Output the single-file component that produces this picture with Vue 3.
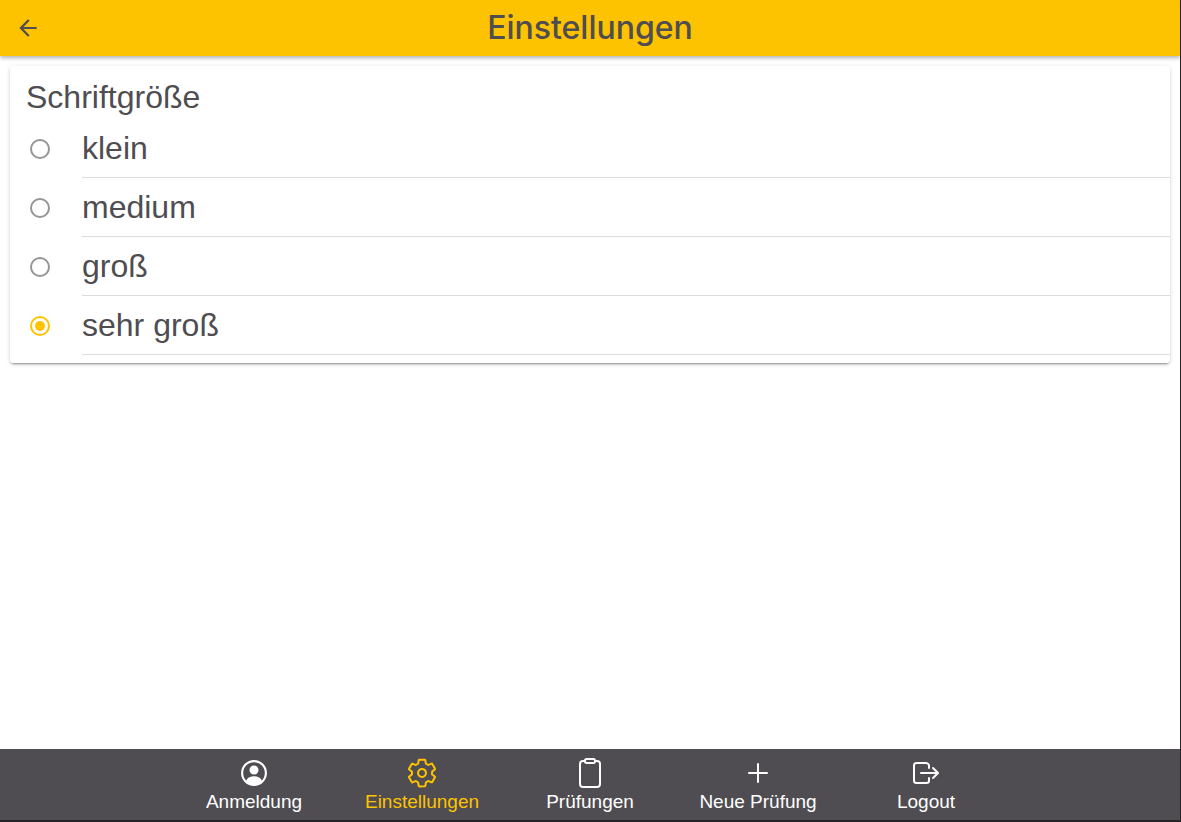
<script setup>
import { ref } from 'vue'

const sizes = [
  { value: 'small', label: 'klein' },
  { value: 'medium', label: 'medium' },
  { value: 'large', label: 'groß' },
  { value: 'xlarge', label: 'sehr groß' }
]
const size = ref('xlarge')

const gear =
  'M262.29 192.31a64 64 0 1057.4 57.4 64.13 64.13 0 00-57.4-57.4zM416.39 256a154.34 154.34 0 01-1.53 20.79l45.21 35.46a10.81 10.81 0 012.45 13.75l-42.77 74a10.81 10.81 0 01-13.14 4.59l-44.9-18.08a16.11 16.11 0 00-15.17 1.75A164.48 164.48 0 01325 400.8a15.94 15.94 0 00-8.82 12.14l-6.73 47.89a11.08 11.08 0 01-10.68 9.17h-85.54a11.11 11.11 0 01-10.69-8.87l-6.72-47.82a16.07 16.07 0 00-9-12.22 155.3 155.3 0 01-21.46-12.57 16 16 0 00-15.11-1.71l-44.89 18.07a10.81 10.81 0 01-13.14-4.58l-42.77-74a10.8 10.8 0 012.45-13.75l38.21-30a16.05 16.05 0 006-14.08c-.36-4.17-.58-8.33-.58-12.5s.21-8.27.58-12.35a16 16 0 00-6.07-13.94l-38.19-30A10.81 10.81 0 0149.48 186l42.77-74a10.81 10.81 0 0113.14-4.59l44.9 18.08a16.11 16.11 0 0015.17-1.75A164.48 164.48 0 01187 111.2a15.94 15.94 0 008.82-12.14l6.73-47.89A11.08 11.08 0 01213.23 42h85.54a11.11 11.11 0 0110.69 8.87l6.72 47.82a16.07 16.07 0 009 12.22 155.3 155.3 0 0121.46 12.57 16 16 0 0015.11 1.71l44.89-18.07a10.81 10.81 0 0113.14 4.58l42.77 74a10.8 10.8 0 01-2.45 13.75l-38.21 30a16.05 16.05 0 00-6.05 14.08c.33 4.14.55 8.3.55 12.47z'
</script>

<template>
  <div class="app">
    <header class="toolbar">
      <button class="back" type="button" aria-label="Zurück">
        <svg viewBox="0 0 24 24" aria-hidden="true">
          <path d="M20 11H7.83l5.59-5.59L12 4l-8 8 8 8 1.41-1.41L7.83 13H20v-2z" />
        </svg>
      </button>
      <h1 class="title">Einstellungen</h1>
    </header>

    <main class="content">
      <fieldset class="card">
        <legend class="heading">Schriftgröße</legend>
        <label v-for="s in sizes" :key="s.value" class="option">
          <input v-model="size" class="radio" type="radio" name="font-size" :value="s.value" />
          <span class="option-text">{{ s.label }}</span>
        </label>
      </fieldset>
    </main>

    <nav class="tabs">
      <a class="tab" href="#anmeldung">
        <svg class="icon" viewBox="0 0 512 512" aria-hidden="true">
          <circle cx="256" cy="256" r="190" class="thick" />
          <circle cx="256" cy="208" r="72" class="solid" />
          <path class="solid" d="M122 386c24-49 76-78 134-78s110 29 134 78c-34 38-82 62-134 62s-100-24-134-62z" />
        </svg>
        <span>Anmeldung</span>
      </a>
      <a class="tab active" href="#einstellungen" aria-current="page">
        <svg class="icon" viewBox="0 0 512 512" aria-hidden="true"><path :d="gear" /></svg>
        <span>Einstellungen</span>
      </a>
      <a class="tab" href="#pruefungen">
        <svg class="icon" viewBox="0 0 512 512" aria-hidden="true">
          <path d="M336 64h32a48 48 0 0148 48v320a48 48 0 01-48 48H144a48 48 0 01-48-48V112a48 48 0 0148-48h32" />
          <rect x="176" y="32" width="160" height="64" rx="26" />
        </svg>
        <span>Prüfungen</span>
      </a>
      <a class="tab" href="#neue-pruefung">
        <svg class="icon" viewBox="0 0 512 512" aria-hidden="true"><path d="M256 112v288M400 256H112" /></svg>
        <span>Neue Prüfung</span>
      </a>
      <a class="tab" href="#logout">
        <svg class="icon" viewBox="0 0 512 512" aria-hidden="true">
          <path d="M304 336v40a40 40 0 01-40 40H104a40 40 0 01-40-40V136a40 40 0 0140-40h152c22.09 0 48 17.91 48 40v40M368 336l80-80-80-80M176 256h256" />
        </svg>
        <span>Logout</span>
      </a>
    </nav>
  </div>
</template>

<style>
body {
  margin: 0;
  background: #fff;
}
</style>

<style scoped>
.app {
  box-sizing: border-box;
  display: flex;
  flex-direction: column;
  min-height: 100vh;
  border-right: 1px solid #262427;
  border-bottom: 2px solid #262427;
  color: #4f4d51;
  font-family: "Liberation Sans", Arial, sans-serif;
}
.toolbar {
  display: grid;
  grid-template-columns: 56px 1fr 56px;
  align-items: center;
  min-height: 56px;
  background: #fdc200;
  box-shadow: 0 2px 4px rgba(0, 0, 0, 0.3);
}
.back {
  display: flex;
  align-items: center;
  justify-content: center;
  height: 48px;
  padding: 0;
  border: 0;
  background: none;
  color: inherit;
}
.back svg {
  width: 26px;
  height: 26px;
  fill: currentColor;
}
.title {
  margin: 0;
  text-align: center;
  font-family: Inter, "Liberation Sans", sans-serif;
  font-size: 32px;
  line-height: 40px;
  font-weight: 500;
}
.content {
  flex: 1;
  padding: 10px;
}
.card {
  margin: 0;
  padding: 0 0 8px;
  border: 0;
  border-radius: 4px;
  background: #fff;
  box-shadow: 0 3px 1px -2px rgba(0, 0, 0, 0.2), 0 2px 2px rgba(0, 0, 0, 0.14), 0 1px 5px rgba(0, 0, 0, 0.12);
}
.heading {
  float: left;
  width: 100%;
  box-sizing: border-box;
  padding: 11px 16px 2px;
  font-size: 32px;
  line-height: 40px;
}
.option {
  clear: both;
  display: flex;
  align-items: center;
  padding-left: 20px;
  font-size: 32px;
  line-height: 40px;
}
.radio {
  appearance: none;
  flex: none;
  display: grid;
  place-items: center;
  box-sizing: border-box;
  width: 20px;
  height: 20px;
  margin: 0 32px 0 0;
  border: 2px solid #959497;
  border-radius: 50%;
}
.radio:checked {
  border-color: #fdc200;
}
.radio:checked::before {
  content: "";
  width: 10px;
  height: 10px;
  border-radius: 50%;
  background: #fdc200;
}
.option-text {
  flex: 1;
  padding: 9px 0;
  border-bottom: 1px solid #dcdcdc;
}
.tabs {
  display: flex;
  justify-content: center;
  background: #4f4d51;
}
.tab {
  display: flex;
  flex: 0 1 168px;
  flex-direction: column;
  align-items: center;
  gap: 2px;
  padding: 8px 0 7px;
  color: #fff;
  font-size: 19px;
  line-height: 22px;
  text-decoration: none;
  white-space: nowrap;
}
.tab.active {
  color: #fdc200;
}
.icon {
  width: 32px;
  height: 32px;
  fill: none;
  stroke: currentColor;
  stroke-width: 32;
  stroke-linecap: round;
  stroke-linejoin: round;
}
.thick {
  stroke-width: 34;
}
.solid {
  fill: currentColor;
  stroke: none;
}
</style>
